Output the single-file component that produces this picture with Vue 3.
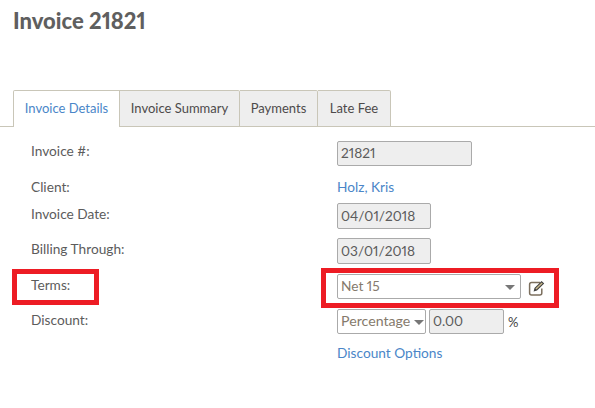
<script setup>
const tabs = ['Invoice Details', 'Invoice Summary', 'Payments', 'Late Fee']
</script>

<template>
  <div class="page">
    <h1 class="title">Invoice 21821</h1>
    <div class="tabs">
      <div v-for="(t, i) in tabs" :key="t" class="tab" :class="{ active: i === 0 }">{{ t }}</div>
    </div>
    <div class="form">
      <div class="row r1">
        <div class="label high">Invoice #:</div>
        <div class="field"><div class="input w135">21821</div></div>
      </div>
      <div class="row r2">
        <div class="label flat">Client:</div>
        <div class="field lift"><a class="link">Holz, Kris</a></div>
      </div>
      <div class="row r3">
        <div class="label high">Invoice Date:</div>
        <div class="field"><div class="input w94">04/01/2018</div></div>
      </div>
      <div class="row r4">
        <div class="label high">Billing Through:</div>
        <div class="field"><div class="input w94">03/01/2018</div></div>
      </div>
      <div class="row r5">
        <div class="label">Terms:</div>
        <div class="field">
          <div class="select w184"><span>Net 15</span><i class="caret"></i></div>
          <svg class="edit" width="18" height="17" viewBox="0 0 18 17" fill="none">
            <path d="M12 3.5H3.6C2.4 3.5 1.6 4.3 1.6 5.5v8.4c0 1.2.8 2 2 2h8.2c1.2 0 2-.8 2-2V9.5" stroke="#7c6f5e" stroke-width="1.5"/>
            <path d="M5.6 12.4l.9-3.4L13.6 1.9l2.6 2.6-7.2 7z" fill="#3f3f3f"/>
            <path d="M7.4 9.6l6.3-6.2 1 1-6.3 6.2z" fill="#c9b98c"/>
          </svg>
          <div class="mark mark-right"></div>
        </div>
        <div class="mark mark-left"></div>
      </div>
      <div class="row r6">
        <div class="label">Discount:</div>
        <div class="field">
          <div class="select w89"><span>Percentage</span><i class="caret dark"></i></div>
          <div class="input w75">0.00</div>
          <span class="pct">%</span>
        </div>
      </div>
      <div class="row r7">
        <div class="label"></div>
        <div class="field lift"><a class="link">Discount Options</a></div>
      </div>
    </div>
  </div>
</template>

<style>
html, body { margin: 0; background: #fff; }
</style>

<style scoped>
.page {
  width: 595px;
  height: 408px;
  overflow: hidden;
  box-sizing: border-box;
  padding-top: 8px;
  font-family: Lato, "Open Sans", sans-serif;
  font-size: 13.7px;
  font-variant-numeric: proportional-nums;
  color: #5c5c5c;
}
.title {
  margin: 0 0 0 13px;
  height: 82px;
  font-size: 22px;
  line-height: 25px;
  font-weight: 900;
  color: #5f5f5f;
}
.tabs {
  display: flex;
  height: 37px;
  box-sizing: border-box;
  padding-left: 13px;
  border-bottom: 1px solid #c9c6b8;
}
.tab {
  height: 37px;
  box-sizing: border-box;
  display: flex;
  align-items: center;
  justify-content: center;
  background: #eeeeee;
  border: 1px solid #c9c6b8;
  border-left: 0;
  border-radius: 0 2px 0 0;
  color: #4d4a4a;
  font-size: 13px;
  padding-bottom: 2px;
}
.tab:nth-child(1) { width: 107px; }
.tab:nth-child(2) { width: 120px; }
.tab:nth-child(3) { width: 78px; }
.tab:nth-child(4) { width: 73px; }
.tab.active {
  background: #fff;
  color: #4a86c8;
  border-left: 1px solid #c9c6b8;
  border-bottom: 0;
  border-radius: 2px 0 0 0;
}
.form { display: flex; flex-direction: column; padding-top: 14px; }
.row { display: flex; align-items: center; position: relative; }
.r1 { height: 25px; margin-bottom: 10px; }
.r2 { height: 22px; margin-bottom: 5px; }
.r3 { height: 26px; margin-bottom: 9px; }
.r4 { height: 26px; margin-bottom: 10px; }
.r5 { height: 25px; margin-bottom: 10px; }
.r6 { height: 25px; margin-bottom: 8px; }
.r7 { height: 22px; }
.label {
  flex: 0 0 337px;
  padding-left: 31px;
  box-sizing: border-box;
  padding-bottom: 4px;
}
.label.high { padding-bottom: 6px; }
.label.flat { padding-bottom: 2px; }
.field { display: flex; align-items: center; position: relative; }
.field.lift { padding-bottom: 2px; }
.link { color: #4a86c8; }
.input, .select {
  box-sizing: border-box;
  border: 1px solid #aaaaaa;
  border-radius: 2px;
  display: flex;
  align-items: center;
  padding: 0 0 2px 3px;
  color: #5c5c5c;
}
.row .input, .row .select { height: 25px; }
.r3 .input, .r4 .input { height: 26px; }
.input { background: #eeeeee; }
.select { background: #fff; color: #857a6c; position: relative; }
.r6 .select { font-size: 14.2px; }
.w135 { width: 135px; }
.w94 { width: 94px; }
.w184 { width: 184px; }
.w89 { width: 89px; }
.w75 { width: 75px; margin-left: 3px; }
.caret {
  position: absolute;
  right: 5px;
  top: 10px;
  width: 0;
  height: 0;
  border-left: 5px solid transparent;
  border-right: 5px solid transparent;
  border-top: 5px solid #777;
}
.caret.dark { right: 1px; }
.edit { margin-left: 7px; margin-top: 1px; }
.pct { margin-left: 4px; color: #3f3f3f; font-size: 13px; }
.mark {
  position: absolute;
  box-sizing: border-box;
  border: 5px solid #ed1c24;
  pointer-events: none;
}
.mark-left { left: 12px; top: -5px; width: 87px; height: 36px; }
.mark-right { left: -16px; top: -6px; width: 238px; height: 40px; }
</style>
